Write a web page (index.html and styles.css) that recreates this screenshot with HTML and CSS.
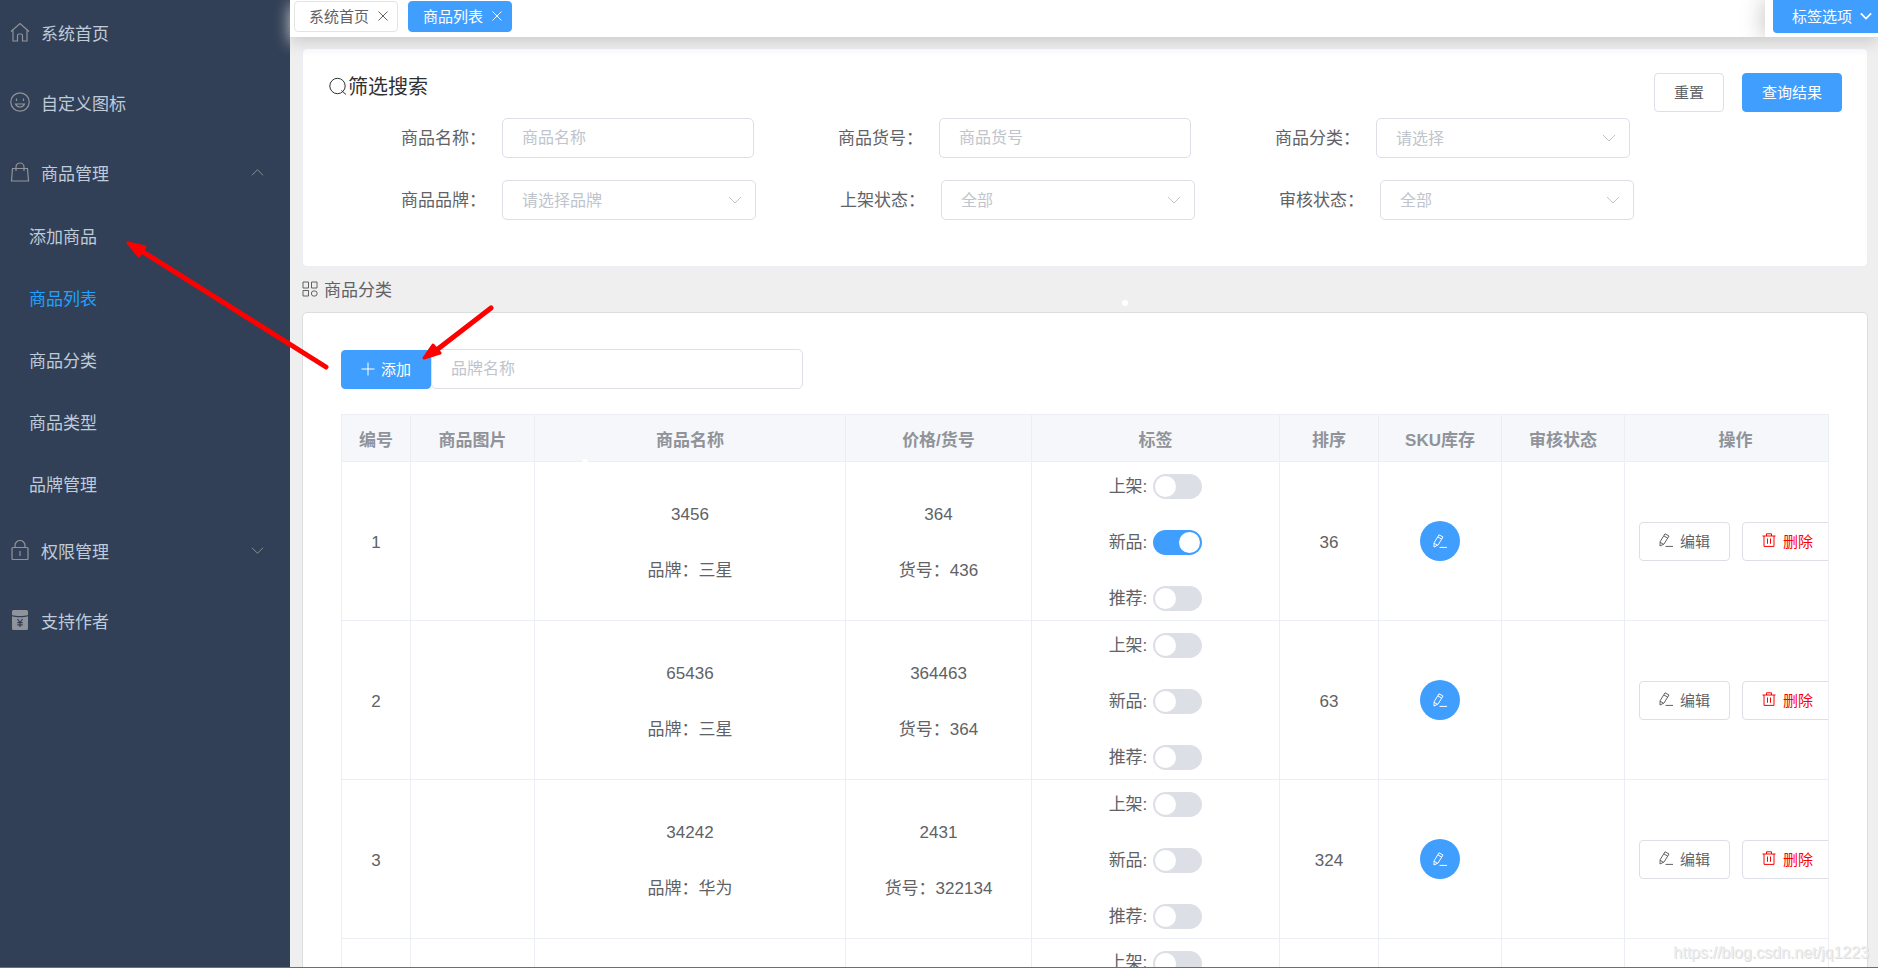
FILE: index.html
```html
<!DOCTYPE html>
<html lang="zh-CN">
<head>
<meta charset="utf-8">
<title>商品列表</title>
<link rel="stylesheet" href="styles.css">
</head>
<body>
<svg class="sprite" aria-hidden="true">
  <symbol id="i-close" viewBox="0 0 12 12"><path d="M1.500 1.500l9 9M10.500 1.500l-9 9"/></symbol>
  <symbol id="i-down" viewBox="0 0 14 14"><path d="M1 4l6 6 6-6"/></symbol>
  <symbol id="i-up" viewBox="0 0 14 14"><path d="M1 10l6-6 6 6"/></symbol>
  <symbol id="i-edit" viewBox="0 0 14 14"><path d="M1 13l.1-4.200L6 .8 10 3 5 11zM5 3l3.700 2.100M1 9.200l3.300 2M6.500 13.400H14"/></symbol>
  <symbol id="i-trash" viewBox="0 0 14 14"><path d="M.5 3h13M4.500 3V.800h5V3M2 3v10.400h10V3M5.500 5.500v5.300M8.500 5.500v5.300"/></symbol>
</svg>
<div class="app">
  <nav class="sidebar">
    <a class="item" href="#">
      <svg class="icon" viewBox="0 0 20 20"><path d="M1 9.500L10 1.500l9 8M3 8.500V19h4.500v-5.500a1.500 1.500 0 0 1 1.500-1.500h2a1.500 1.500 0 0 1 1.500 1.500V19H17V8.500"/></svg>
      <span>系统首页</span>
    </a>
    <a class="item" href="#">
      <svg class="icon" viewBox="0 0 20 20"><circle cx="10" cy="10" r="9.200"/><path d="M6.500 6.500v2.500M13.500 6.500v2.500M5.500 12c1.800 4 7.200 4 9 0z"/></svg>
      <span>自定义图标</span>
    </a>
    <a class="item" href="#">
      <svg class="icon" viewBox="0 0 20 20"><path d="M2.500 6.500h15L18.500 19h-17zM6 9V5a4 4 0 0 1 8 0v4"/></svg>
      <span>商品管理</span>
      <svg class="arrow"><use href="#i-up"/></svg>
    </a>
    <div class="submenu">
      <a class="sub" href="#">添加商品</a>
      <a class="sub active" href="#">商品列表</a>
      <a class="sub" href="#">商品分类</a>
      <a class="sub" href="#">商品类型</a>
      <a class="sub" href="#">品牌管理</a>
    </div>
    <a class="item" href="#">
      <svg class="icon" viewBox="0 0 20 20"><rect x="2" y="7.500" width="16" height="12" rx="1"/><path d="M5 7.500V5.500a5 5 0 0 1 10 0v2M10 11v5"/></svg>
      <span>权限管理</span>
      <svg class="arrow"><use href="#i-down"/></svg>
    </a>
    <a class="item" href="#">
      <svg class="icon" viewBox="0 0 20 20"><path class="solid" d="M3.500 0h13A1.500 1.500 0 0 1 18 1.500V5c-4 1.300-12 1.300-16 0V1.500A1.500 1.500 0 0 1 3.500 0zM2 6.200c4 1.300 12 1.300 16 0v12.300a1.500 1.500 0 0 1-1.500 1.500h-13A1.500 1.500 0 0 1 2 18.500z"/><path class="yen" d="M7.500 9l2.500 3.500L12.500 9M10 12.500V17M7.300 12.700h5.400M7.300 14.800h5.400"/></svg>
      <span>支持作者</span>
    </a>
  </nav>

  <div class="main">
    <header class="tabs">
      <button class="tab" type="button">系统首页<svg><use href="#i-close"/></svg></button>
      <button class="tab current" type="button">商品列表<svg><use href="#i-close"/></svg></button>
      <div class="options">
        <button type="button">标签选项<svg><use href="#i-down"/></svg></button>
      </div>
    </header>

    <div class="content">
      <section class="panel search">
        <div class="head">
          <h1><svg viewBox="0 0 18 20"><circle cx="8.500" cy="9" r="7.700"/><path d="M12.500 13.500l4.500 4"/></svg>筛选搜索</h1>
          <div class="actions">
            <button class="btn" type="button">重置</button>
            <button class="btn primary" type="button">查询结果</button>
          </div>
        </div>
        <form class="filters">
          <div class="line">
            <label for="name">商品名称：</label>
            <input id="name" type="text" placeholder="商品名称">
            <label for="code">商品货号：</label>
            <input id="code" type="text" placeholder="商品货号">
            <label for="kind">商品分类：</label>
            <div class="select"><select id="kind"><option>请选择</option></select><svg><use href="#i-down"/></svg></div>
          </div>
          <div class="line">
            <label for="brand">商品品牌：</label>
            <div class="select"><select id="brand"><option>请选择品牌</option></select><svg><use href="#i-down"/></svg></div>
            <label for="shelf">上架状态：</label>
            <div class="select"><select id="shelf"><option>全部</option></select><svg><use href="#i-down"/></svg></div>
            <label for="audit">审核状态：</label>
            <div class="select"><select id="audit"><option>全部</option></select><svg><use href="#i-down"/></svg></div>
          </div>
        </form>
      </section>

      <h2 class="section"><svg viewBox="0 0 16 16"><path d="M1 1h5.500v6H1zM9.500 1H15v6H9.500zM1 9.500h5.500V15H1z"/><rect x="9.500" y="10" width="5.500" height="5" rx="2"/></svg>商品分类</h2>

      <section class="panel list">
        <div class="toolbar">
          <button class="btn primary" type="button"><svg viewBox="0 0 14 14"><path d="M7 .5v13M.5 7h13"/></svg>添加</button>
          <input type="text" placeholder="品牌名称" aria-label="品牌名称">
        </div>
        <table>
          <colgroup><col class="c-id"><col class="c-pic"><col><col class="c-price"><col class="c-tag"><col class="c-sort"><col class="c-sku"><col class="c-audit"><col class="c-ops"></colgroup>
          <thead>
            <tr><th>编号</th><th>商品图片</th><th>商品名称</th><th>价格/货号</th><th>标签</th><th>排序</th><th>SKU库存</th><th>审核状态</th><th>操作</th></tr>
          </thead>
          <tbody>
            <tr>
              <td>1</td><td></td>
              <td><div class="stack"><p>3456</p><p>品牌：三星</p></div></td>
              <td><div class="stack"><p>364</p><p>货号：436</p></div></td>
              <td><div class="stack"><label>上架: <input type="checkbox"></label><label>新品: <input type="checkbox" checked></label><label>推荐: <input type="checkbox"></label></div></td>
              <td>36</td>
              <td class="tool"><button class="round" type="button" aria-label="编辑库存"><svg><use href="#i-edit"/></svg></button></td>
              <td></td>
              <td class="tool"><div class="ops"><button class="btn" type="button"><svg><use href="#i-edit"/></svg>编辑</button><button class="btn danger" type="button"><svg><use href="#i-trash"/></svg>删除</button></div></td>
            </tr>
            <tr>
              <td>2</td><td></td>
              <td><div class="stack"><p>65436</p><p>品牌：三星</p></div></td>
              <td><div class="stack"><p>364463</p><p>货号：364</p></div></td>
              <td><div class="stack"><label>上架: <input type="checkbox"></label><label>新品: <input type="checkbox"></label><label>推荐: <input type="checkbox"></label></div></td>
              <td>63</td>
              <td class="tool"><button class="round" type="button" aria-label="编辑库存"><svg><use href="#i-edit"/></svg></button></td>
              <td></td>
              <td class="tool"><div class="ops"><button class="btn" type="button"><svg><use href="#i-edit"/></svg>编辑</button><button class="btn danger" type="button"><svg><use href="#i-trash"/></svg>删除</button></div></td>
            </tr>
            <tr>
              <td>3</td><td></td>
              <td><div class="stack"><p>34242</p><p>品牌：华为</p></div></td>
              <td><div class="stack"><p>2431</p><p>货号：322134</p></div></td>
              <td><div class="stack"><label>上架: <input type="checkbox"></label><label>新品: <input type="checkbox"></label><label>推荐: <input type="checkbox"></label></div></td>
              <td>324</td>
              <td class="tool"><button class="round" type="button" aria-label="编辑库存"><svg><use href="#i-edit"/></svg></button></td>
              <td></td>
              <td class="tool"><div class="ops"><button class="btn" type="button"><svg><use href="#i-edit"/></svg>编辑</button><button class="btn danger" type="button"><svg><use href="#i-trash"/></svg>删除</button></div></td>
            </tr>
            <tr>
              <td></td><td></td><td></td><td></td>
              <td><div class="stack"><label>上架: <input type="checkbox"></label></div></td>
              <td></td><td></td><td></td><td></td>
            </tr>
          </tbody>
        </table>
      </section>
    </div>
  </div>
  <div class="watermark">https://blog.csdn.net/jq1223</div>
</div>
<svg class="notes" width="1140" height="480" aria-hidden="true">
  <path class="shaft" d="M326 367L140 250M491 308L434 352"/>
  <path class="tip" d="M128 243L145 247L139 256ZM424 358L433 345L440 353Z"/>
  <circle class="dot" cx="1125" cy="303" r="3"/>
  <circle class="dot" cx="585" cy="462" r="3"/>
</svg>
</body>
</html>
```
FILE: styles.css
```css
* {
  box-sizing: border-box;
}

body {
  margin: 0;
  background: #fff;
  color: #606266;
  font-family: "Liberation Sans", "Noto Sans CJK SC", sans-serif;
  font-size: 17px;
}

h1,
h2,
p {
  margin: 0;
  font-weight: 400;
}

a {
  text-decoration: none;
}

button,
input,
select {
  font-family: inherit;
}

svg {
  fill: none;
  stroke: currentColor;
  stroke-width: 1;
  flex: none;
}

.sprite {
  display: none;
}

.app {
  position: relative;
  display: flex;
  height: calc(100vh - 2px);
  overflow: hidden;
  border-bottom: 1px solid #736d66;
}

/* Sidebar */
.sidebar {
  flex: none;
  width: 290px;
  margin-top: -3px;
  background: #324057;
}

.item {
  display: flex;
  align-items: center;
  height: 70px;
  padding: 0 26px 0 10px;
  color: #bfcbd9;
}

.item .icon {
  width: 20px;
  height: 20px;
  margin-right: 11px;
  color: #909399;
  stroke-width: 1.2;
}

.item .arrow {
  width: 13px;
  height: 13px;
  margin-left: auto;
  color: #909399;
}

.solid {
  fill: #909399;
  stroke: none;
}

.yen {
  stroke: #324057;
}

.submenu {
  margin: -3px 0 1px;
}

.sub {
  display: flex;
  align-items: center;
  height: 62px;
  padding-left: 29px;
  color: #bfcbd9;
}

.sub.active {
  color: #20a0ff;
}

/* Tab bar */
.main {
  flex: 1;
  min-width: 0;
  background: #efefef;
}

.tabs {
  position: relative;
  z-index: 1;
  display: flex;
  align-items: flex-start;
  gap: 10px;
  height: 37px;
  padding: 1px 0 0 4px;
  background: #fff;
  box-shadow: 0 5px 15px #ccc;
}

.tab {
  display: flex;
  align-items: center;
  gap: 8px;
  height: 31px;
  padding: 0 8px 2px 14px;
  border: 1px solid #e4e4e4;
  border-radius: 4px;
  background: #fff;
  color: #606266;
  font-size: 15px;
}

.tab svg {
  width: 12px;
  height: 12px;
}

.tab.current {
  border-color: #409eff;
  background: #409eff;
  color: #fff;
}

.options {
  height: 37px;
  margin: -1px 0 0 auto;
  padding-left: 8px;
  background: #fff;
  box-shadow: 0 0 25px #bbb;
  clip-path: inset(0 0 0 -30px);
}

.options button {
  display: flex;
  align-items: center;
  gap: 8px;
  height: 33px;
  padding: 0 6px 2px 19px;
  border: 0;
  border-radius: 0 0 0 4px;
  background: #409eff;
  color: #fff;
  font-size: 15px;
}

.options svg {
  width: 12px;
  height: 12px;
  stroke-width: 2;
}

/* Panels */
.content {
  padding: 11px 10px 0 12px;
}

.panel {
  border: 1px solid #ebeef5;
  border-radius: 5px;
  background: #fff;
}

.search {
  padding-bottom: 46px;
}

.head {
  display: flex;
  align-items: flex-start;
  justify-content: space-between;
  padding: 24px 25px 0 26px;
}

.head h1 {
  display: flex;
  align-items: center;
  color: #303133;
  font-size: 20px;
  line-height: 28px;
}

.head h1 svg {
  width: 18px;
  height: 20px;
  margin-right: 1px;
}

.actions {
  display: flex;
  gap: 18px;
}

.btn {
  display: flex;
  align-items: center;
  gap: 7px;
  height: 39px;
  padding: 0 19px 2px;
  border: 1px solid #dcdfe6;
  border-radius: 4px;
  background: #fff;
  color: #606266;
  font-size: 15px;
  white-space: nowrap;
}

.btn svg {
  width: 14px;
  height: 14px;
}

.btn.primary {
  border-color: #409eff;
  background: #409eff;
  color: #fff;
}

.btn.danger {
  color: #f00;
}

.filters {
  display: flex;
  flex-direction: column;
  gap: 22px;
  padding: 6px 0 0 14px;
}

.line {
  display: flex;
  align-items: center;
}

.line label {
  width: 185px;
  padding: 0 16px 3px 0;
  text-align: right;
}

input[type="text"],
select {
  width: 252px;
  height: 40px;
  padding: 0 19px;
  border: 1px solid #dcdfe6;
  border-radius: 5px;
  background: #fff;
  color: #c0c4cc;
  font-size: 16px;
}

input::placeholder {
  color: #c0c4cc;
}

.select {
  display: grid;
  align-items: center;
  width: 254px;
}

select {
  grid-area: 1 / 1;
  width: 100%;
  appearance: none;
}

.select svg {
  grid-area: 1 / 1;
  justify-self: end;
  width: 14px;
  height: 14px;
  margin-right: 14px;
  color: #c0c4cc;
  pointer-events: none;
}

.section {
  display: flex;
  align-items: center;
  gap: 6px;
  height: 45px;
  padding-bottom: 2px;
  font-size: 17px;
}

.section svg {
  width: 16px;
  height: 16px;
}

.list {
  padding: 36px 38px;
  border-color: #dcdddf;
}

.toolbar {
  display: flex;
  align-items: flex-end;
  margin-bottom: 25px;
}

.toolbar .btn {
  gap: 6px;
}

.toolbar input[type="text"] {
  width: 372px;
}

/* Product table */
table {
  width: 100%;
  border-collapse: collapse;
  table-layout: fixed;
}

.c-id { width: 69px; }
.c-pic { width: 124px; }
.c-price { width: 186px; }
.c-tag { width: 248px; }
.c-sort { width: 99px; }
.c-sku,
.c-audit { width: 123px; }
.c-ops { width: 204px; }

th,
td {
  padding: 0;
  border: 1px solid #ebeef5;
  text-align: center;
}

th {
  height: 47px;
  background: #f5f7fa;
  color: #909399;
}

th:last-child {
  padding-left: 18px;
}

td {
  height: 159px;
  padding-top: 3px;
}

td.tool {
  padding-top: 0;
}

tr:last-child td {
  padding-top: 11px;
  vertical-align: top;
}

.stack {
  display: flex;
  flex-direction: column;
  align-items: center;
  gap: 30px;
  line-height: 26px;
}

.stack label {
  display: flex;
  align-items: center;
  gap: 6px;
}

input[type="checkbox"] {
  width: 49px;
  height: 25px;
  margin: 0;
  padding: 2px;
  border-radius: 13px;
  background: #dcdfe6;
  appearance: none;
}

input[type="checkbox"]::before {
  content: "";
  display: block;
  width: 21px;
  height: 21px;
  border-radius: 50%;
  background: #fff;
}

input[type="checkbox"]:checked {
  background: #409eff;
}

input[type="checkbox"]:checked::before {
  margin-left: auto;
}

.round {
  display: inline-flex;
  align-items: center;
  justify-content: center;
  width: 40px;
  height: 40px;
  padding: 0;
  border: 0;
  border-radius: 50%;
  background: #409eff;
  color: #fff;
}

.round svg {
  width: 14px;
  height: 14px;
}

.ops {
  display: flex;
  gap: 12px;
  margin-left: 14px;
  overflow: hidden;
}

.ops .btn {
  flex: none;
}

/* Overlays */
.watermark {
  position: absolute;
  right: 9px;
  bottom: 5px;
  color: #eee;
  font-size: 16px;
  line-height: 18px;
  text-shadow: 1px 1px 0 #ddd;
}

.notes {
  position: absolute;
  top: 0;
  left: 0;
  pointer-events: none;
}

.shaft {
  stroke: #f00;
  stroke-width: 5;
  stroke-linecap: round;
}

.tip {
  fill: #f00;
  stroke: #f00;
  stroke-width: 3;
  stroke-linejoin: round;
}

.dot {
  fill: #fff;
  stroke: none;
}
```
